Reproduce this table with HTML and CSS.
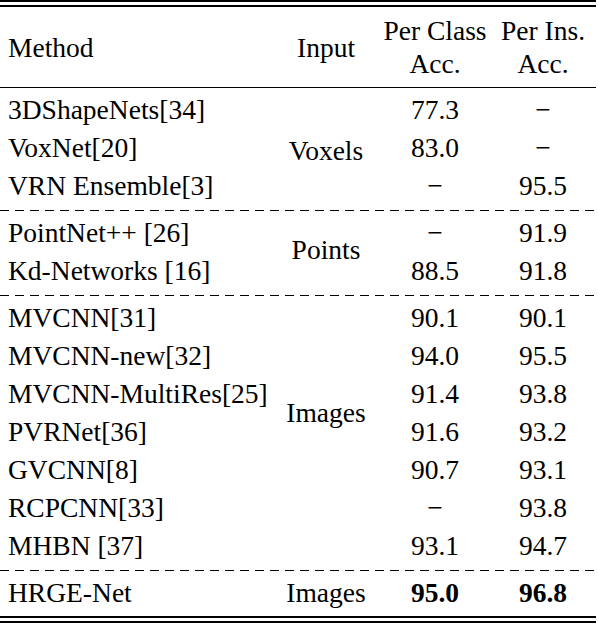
FILE: index.html
```html
<!DOCTYPE html>
<html lang="en">
<head>
	<meta charset="UTF-8">
	<title>Results</title>
	<link rel="stylesheet" href="styles.css">
</head>
<body>
	<table class="results">
		<colgroup>
			<col class="c-method">
			<col class="c-input">
			<col class="c-class">
			<col class="c-ins">
		</colgroup>
		<thead>
			<tr>
				<th class="method">Method</th>
				<th>Input</th>
				<th>Per Class<br>Acc.</th>
				<th class="ins">Per Ins.<br>Acc.</th>
			</tr>
		</thead>
		<tbody>
			<tr class="first">
				<td class="method">3DShapeNets[34]</td>
				<td class="input voxels" rowspan="3">Voxels</td>
				<td>77.3</td>
				<td class="ins">−</td>
			</tr>
			<tr>
				<td class="method">VoxNet[20]</td>
				<td>83.0</td>
				<td class="ins">−</td>
			</tr>
			<tr class="last">
				<td class="method">VRN Ensemble[3]</td>
				<td>−</td>
				<td class="ins">95.5</td>
			</tr>
			<tr class="sep"><td colspan="4"></td></tr>
			<tr class="first">
				<td class="method">PointNet++ [26]</td>
				<td class="input points" rowspan="2">Points</td>
				<td>−</td>
				<td class="ins">91.9</td>
			</tr>
			<tr class="last">
				<td class="method">Kd-Networks [16]</td>
				<td>88.5</td>
				<td class="ins">91.8</td>
			</tr>
			<tr class="sep"><td colspan="4"></td></tr>
			<tr class="first">
				<td class="method">MVCNN[31]</td>
				<td class="input images" rowspan="7">Images</td>
				<td>90.1</td>
				<td class="ins">90.1</td>
			</tr>
			<tr>
				<td class="method">MVCNN-new[32]</td>
				<td>94.0</td>
				<td class="ins">95.5</td>
			</tr>
			<tr>
				<td class="method">MVCNN-MultiRes[25]</td>
				<td>91.4</td>
				<td class="ins">93.8</td>
			</tr>
			<tr>
				<td class="method">PVRNet[36]</td>
				<td>91.6</td>
				<td class="ins">93.2</td>
			</tr>
			<tr>
				<td class="method">GVCNN[8]</td>
				<td>90.7</td>
				<td class="ins">93.1</td>
			</tr>
			<tr>
				<td class="method">RCPCNN[33]</td>
				<td>−</td>
				<td class="ins">93.8</td>
			</tr>
			<tr class="last">
				<td class="method">MHBN [37]</td>
				<td>93.1</td>
				<td class="ins">94.7</td>
			</tr>
			<tr class="sep"><td colspan="4"></td></tr>
			<tr class="first final">
				<td class="method">HRGE-Net</td>
				<td>Images</td>
				<td><b>95.0</b></td>
				<td class="ins"><b>96.8</b></td>
			</tr>
		</tbody>
	</table>
</body>
</html>
```

FILE: styles.css
```css
body{margin: 0;background: #fff;color: #000;font-family: "Liberation Serif", "Times New Roman", serif;}
.results{width: 596px;border-collapse: collapse;table-layout: fixed;font-size: 27.5px;border-top: 7px double #000;border-bottom: 7px double #000;}
.c-method{width: 282px;}
.c-input{width: 88px;}
.c-class{width: 130px;}
.c-ins{width: 96px;}
.results th{font-weight: normal;line-height: 33px;padding: 7px 0 7px;text-align: center;vertical-align: middle;border-bottom: 1.5px solid #000;white-space: nowrap;}
.results td{line-height: 38px;padding: 0;text-align: center;white-space: nowrap;}
.results .method{text-align: left;padding-left: 8px;}
.results .ins{padding-right: 10px;}
.results tr.first td{padding-top: 3px;}
.results tr.last td{padding-bottom: 5px;}
.results tr.final td{padding-bottom: 4px;}
.results td.input{padding-top: 0;padding-bottom: 0;vertical-align: middle;}
.results td.voxels{padding-top: 40px;}
.results td.points{padding-bottom: 10px;}
.results td.images{padding-bottom: 44px;}
.results tr.sep td{height: 1px;padding: 0;line-height: 0;background: repeating-linear-gradient(to right, #000 0 9px, transparent 9px 15px);}
.results b{font-weight: bold;}
```
